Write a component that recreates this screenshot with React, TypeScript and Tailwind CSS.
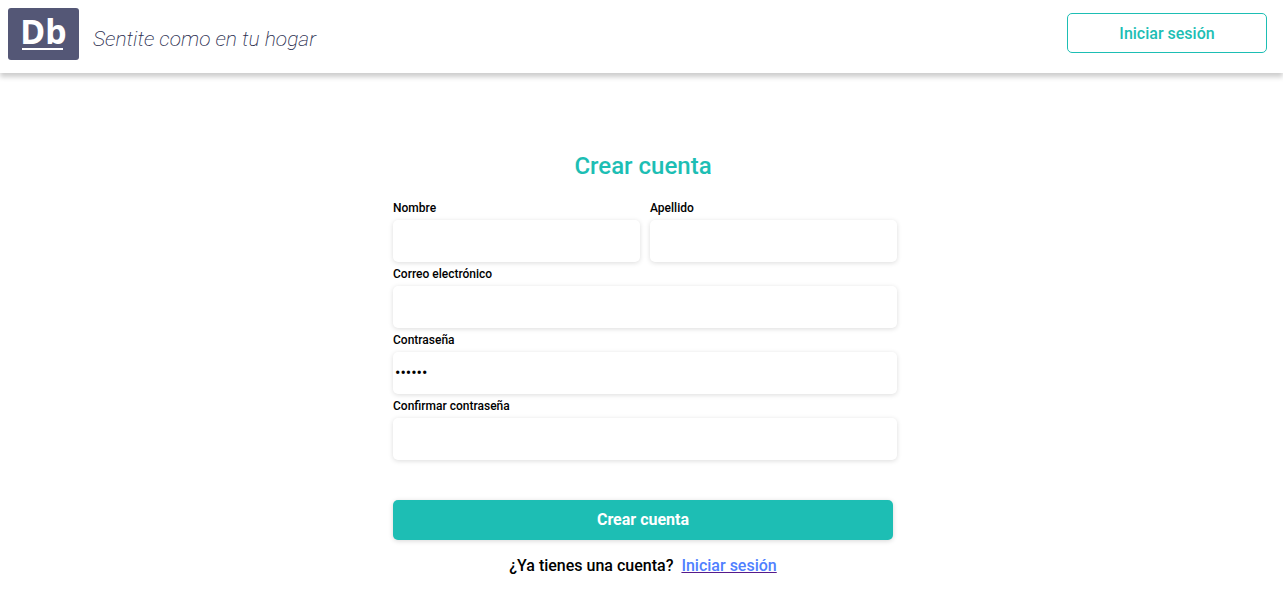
import { useId, useState } from "react";

type FieldProps = {
  label: string;
  type?: string;
  initial?: string;
};

function Field({ label, type = "text", initial = "" }: FieldProps) {
  const id = useId();
  const [value, setValue] = useState(initial);
  return (
    <div className="flex min-w-0 flex-1 flex-col gap-1">
      <label htmlFor={id} className="text-xs font-medium">
        {label}
      </label>
      <input
        id={id}
        type={type}
        value={value}
        onChange={(e) => setValue(e.target.value)}
        className="h-[42px] w-full rounded-[5px] bg-white px-0.5 pb-0.5 text-base shadow-[0_1px_5px_rgba(0,0,0,0.14)] outline-none"
      />
    </div>
  );
}

function Logo() {
  return (
    <a
      href="#inicio"
      className="flex h-[52px] w-[71px] flex-col items-center rounded-[3px] bg-[#545776] pt-1.5 text-white"
    >
      <span className="font-['Noto_Sans',sans-serif] text-[34px] leading-[34px] font-bold">Db</span>
      <span className="-ml-0.5 h-0.5 w-[41px] bg-white" />
    </a>
  );
}

export default function App() {
  return (
    <div className="min-h-screen bg-white font-[Roboto,sans-serif] text-black">
      <header className="flex h-[73px] items-start justify-between pt-2 pr-4 pl-2 shadow-[0_4px_5px_rgba(0,0,0,0.2)]">
        <div className="flex items-center gap-[14px]">
          <Logo />
          <p className="pt-2.5 text-[21px] leading-7 font-extralight text-[#2b2e50] italic">
            Sentite como en tu hogar
          </p>
        </div>
        <button
          type="button"
          className="mt-[5px] h-10 w-[200px] rounded-[5px] border border-[#1dbeb4] pt-0.5 font-medium text-[#1dbeb4]"
        >
          Iniciar sesión
        </button>
      </header>

      <main className="flex justify-center pt-[77px] pl-[3px]">
        <div className="flex w-[500px] flex-col">
          <h1 className="text-center text-2xl font-medium text-[#1dbeb4]">Crear cuenta</h1>
          <form className="mt-[18px] flex flex-col" onSubmit={(e) => e.preventDefault()}>
            <div className="-mr-1 flex flex-col gap-1">
              <div className="flex gap-[10px]">
                <Field label="Nombre" />
                <Field label="Apellido" />
              </div>
              <Field label="Correo electrónico" type="email" />
              <Field label="Contraseña" type="password" initial="secret" />
              <Field label="Confirmar contraseña" type="password" />
            </div>
            <button
              type="submit"
              className="mt-10 h-10 rounded-[5px] bg-[#1dbeb4] font-bold text-white shadow-[0_1px_5px_rgba(0,0,0,0.16)]"
            >
              Crear cuenta
            </button>
          </form>
          <p className="mt-[14px] flex justify-center gap-2 font-medium">
            ¿Ya tienes una cuenta?
            <a href="#login" className="text-[#4f80ff] underline decoration-[#551a8b]">
              Iniciar sesión
            </a>
          </p>
        </div>
      </main>
    </div>
  );
}
